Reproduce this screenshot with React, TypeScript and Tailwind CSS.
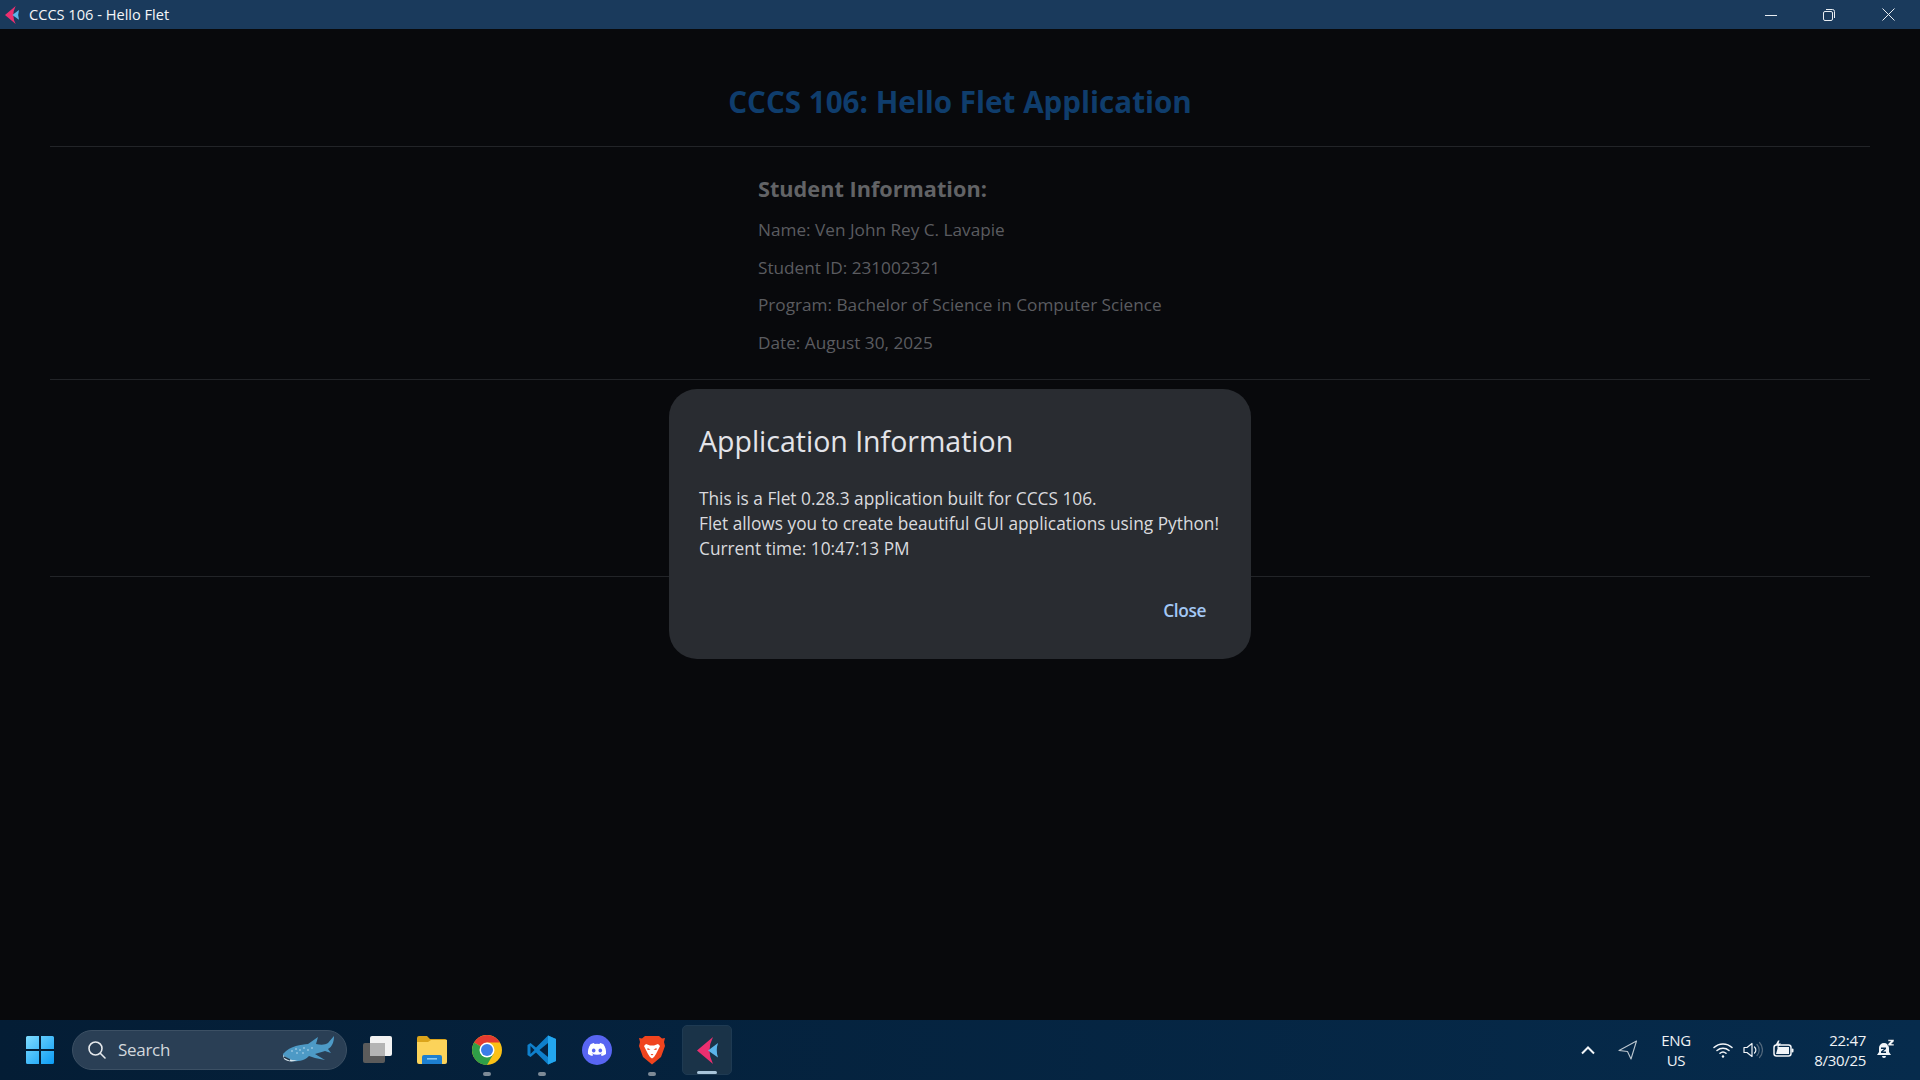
const font = "font-['Open_Sans',sans-serif]";

const FletLogo = ({ w, h }: { w: number; h: number }) => (
  <svg width={w} height={h} viewBox="0 0 21 27">
    <path d="M16 0 L0 13.500 L16 27 Q9 13.500 16 0Z" fill="#ec2f70" />
    <path d="M21 6 L11 13.500 L21 20.500 Q18.500 13.500 21 6Z" fill="#5bb4ea" />
  </svg>
);

const WindowsLogo = () => (
  <svg width="30" height="30" viewBox="0 0 30 30">
    <defs>
      <linearGradient id="win" x1="0" y1="0" x2="1" y2="1">
        <stop offset="0" stopColor="#7fdcff" />
        <stop offset="1" stopColor="#0b9cf5" />
      </linearGradient>
    </defs>
    <path d="M1 2.500A1.500 1.500 0 0 1 2.500 1H14v13H1ZM16 1h11.500A1.500 1.500 0 0 1 29 2.500V14H16ZM1 16h13v13H2.500A1.500 1.500 0 0 1 1 27.500ZM16 16h13v11.500a1.500 1.500 0 0 1-1.500 1.500H16Z" fill="url(#win)" />
  </svg>
);

const WhaleShark = () => (
  <svg width="54" height="30" viewBox="0 0 54 30">
    <path d="M2 19 C10 10 20 10 27 9 L37 2 L35 9 C40 10 44 10 47 8 L53 1 C53 7 51 12 47 14 L50 18 L44 16 C41 17 37 18 34 19 L44 25 L34 23 L28 21 C24 26 14 27 9 26 C5 25 2 23 2 19Z" fill="#4d9ac6" />
    <path d="M2 20 C6 24 12 26 17 25 C13 27 6 27 3 24Z" fill="#d8e6ee" />
    <path d="M3 22 L9 25" stroke="#22384a" strokeWidth="1.400" />
    <g fill="#bfe0f2">
      <circle cx="11" cy="16" r=".8" /><circle cx="15" cy="14" r=".8" /><circle cx="19" cy="15" r=".8" />
      <circle cx="23" cy="13" r=".8" /><circle cx="27" cy="15" r=".8" /><circle cx="31" cy="13" r=".8" /><circle cx="16" cy="18" r=".8" /><circle cx="22" cy="18" r=".8" />
    </g>
  </svg>
);

const TaskView = () => (
  <svg width="30" height="30" viewBox="0 0 30 30">
    <rect x="1" y="8" width="22" height="20" rx="2" fill="#5b5b5b" />
    <rect x="8" y="1" width="22" height="20" rx="2" fill="#f2f2f2" />
    <rect x="8" y="8" width="15" height="13" fill="#b4b4b4" />
  </svg>
);

const Explorer = () => (
  <svg width="30" height="28" viewBox="0 0 30 28">
    <path d="M0 2a2 2 0 0 1 2-2h8l3 3h15a2 2 0 0 1 2 2v6H0Z" fill="#dba41b" />
    <path d="M0 6h11l3-2h16v22a2 2 0 0 1-2 2H2a2 2 0 0 1-2-2Z" fill="#fcd35a" />
    <path d="M5 28v-7a2 2 0 0 1 2-2h16a2 2 0 0 1 2 2v7Z" fill="#1d7fd0" />
    <rect x="10" y="22" width="10" height="1.600" fill="#8cc8f0" />
  </svg>
);

const Chrome = () => (
  <svg width="30" height="30" viewBox="4 4 40 40">
    <circle cx="24" cy="24" r="20" fill="#fbc116" />
    <path d="M6.680 14 A20 20 0 0 1 41.320 14 H24 L15.340 19Z" fill="#e53a30" />
    <path d="M6.680 14 A20 20 0 0 0 24 44 L32.660 29 L15.340 19Z" fill="#2f9e48" />
    <circle cx="24" cy="24" r="10" fill="#fff" />
    <circle cx="24" cy="24" r="8" fill="#3b7de8" />
  </svg>
);

const VSCode = () => (
  <svg width="30" height="30" viewBox="0 0 30 30">
    <path d="M21 0.500 L29 4 V26 L21 29.500 L9 17.500 L3.500 22 L0.500 20 V10 L3.500 8 L9 12.500Z" fill="#0f80cc" />
    <path d="M21 8 L12.500 15 L21 22Z" fill="#04223f" />
    <path d="M3.500 11 L7.500 15 L3.500 19Z" fill="#04223f" />
    <path d="M21 0.500 L29 4 V26 L21 29.500Z" fill="#23a6ee" />
  </svg>
);

const Discord = () => (
  <svg width="30" height="30" viewBox="0 0 30 30">
    <circle cx="15" cy="15" r="15" fill="#5865f2" />
    <path d="M21.500 9.200A15 15 0 0 0 18 8.100l-.5 1a14 14 0 0 0-5 0l-.5-1a15 15 0 0 0-3.500 1.100C6.300 12.500 5.700 15.700 6 18.900A15 15 0 0 0 10.300 21l.9-1.500-1.600-.8.4-.3a10.500 10.500 0 0 0 10 0l.4.3-1.600.8.900 1.500A15 15 0 0 0 24 18.900c.4-3.700-.6-6.900-2.500-9.700Z" fill="#fff" />
    <ellipse cx="11.700" cy="15.500" rx="1.800" ry="2.100" fill="#5865f2" />
    <ellipse cx="18.300" cy="15.500" rx="1.800" ry="2.100" fill="#5865f2" />
  </svg>
);

const Brave = () => (
  <svg width="28" height="30" viewBox="0 0 28 30">
    <path d="M7 1 H21 L24 3.500 L27 3 L26 7 L27 11 L23 22 L14 29.500 L5 22 L1 11 L2 7 L1 3 L4 3.500Z" fill="#f0441e" />
    <path d="M8 9 L12 10.500 H16 L20 9 L22 11 L19.500 16 L18 19 L16 22 L14 23.500 L12 22 L10 19 L8.500 16 L6 11Z" fill="#fff" />
    <path d="M9.500 13 L12.500 14.500 L9.500 15ZM18.500 13 L15.500 14.500 L18.500 15ZM12.500 19 H15.500 L14 20.500Z" fill="#f0441e" />
  </svg>
);

const TaskItem = ({ children, running, active }: { children: React.ReactNode; running?: boolean; active?: boolean }) => (
  <div className={`relative flex h-[50px] w-[50px] items-center justify-center rounded-[5px] ${active ? 'border border-[#1e3a52] bg-[#1a3348]' : ''}`}>
    {children}
    {running && <span className="absolute bottom-[-1px] left-1/2 h-[4px] w-[8px] -translate-x-1/2 rounded-full bg-[#7d8a96]" />}
    {active && <span className="absolute bottom-[0px] left-1/2 h-[3px] w-[20px] -translate-x-1/2 rounded-full bg-[#a8c4da]" />}
  </div>
);

const TrayIcons = () => (
  <div className="flex items-center gap-[10px]">
    <svg width="20" height="20" viewBox="0 0 20 20" fill="none" stroke="#f2f5f8" strokeWidth="1.500" strokeLinecap="round">
      <path d="M1 7.500a13 13 0 0 1 18 0M4 10.500a9 9 0 0 1 12 0M7 13.300a4.500 4.500 0 0 1 6 0" />
      <circle cx="10" cy="16.500" r="1.200" fill="#f2f5f8" stroke="none" />
    </svg>
    <svg width="20" height="20" viewBox="0 0 20 20" fill="none" strokeWidth="1.200">
      <path d="M1 7.500h3l5-4v13l-5-4H1Z" stroke="#f2f5f8" strokeLinejoin="round" />
      <path d="M11.500 7a4 4 0 0 1 0 6" stroke="#f2f5f8" strokeLinecap="round" />
      <path d="M14 4.500a8 8 0 0 1 0 11M16.500 2.500a11 11 0 0 1 0 15" stroke="#52687c" strokeLinecap="round" />
    </svg>
    <svg width="21" height="20" viewBox="0 0 21 20" fill="none">
      <rect x="1" y="5" width="17" height="11" rx="2.500" stroke="#f2f5f8" strokeWidth="1.500" />
      <path d="M3 14l2-7h11v7Z" fill="#f2f5f8" />
      <rect x="18.500" y="8.500" width="2" height="4" rx="1" fill="#f2f5f8" />
      <path d="M5 0.500 L2.500 5 H5 L4 8.500 L8 3.500 H5.500 L6.500 0.500Z" fill="#f2f5f8" />
    </svg>
  </div>
);

const App = () => {
  return (
    <div className={`flex h-[1080px] w-[1920px] flex-col overflow-hidden bg-[#08090c] ${font}`}>
      {/* Title bar */}
      <header className="flex h-[29px] shrink-0 items-center bg-[#1a3a5c] text-white">
        <div className="ml-[5px] flex w-[24px] items-center"><FletLogo w={14} h={18} /></div>
        <span className="text-[14.600px] tracking-[0px] text-[#f4f6f8]">CCCS 106 - Hello Flet</span>
        <div className="ml-auto flex items-center pr-[25px]">
          <svg className="mr-[46px]" width="12" height="12" viewBox="0 0 12 12"><path d="M0 6.500h12" stroke="#e8edf2" strokeWidth="1" /></svg>
          <svg className="mr-[47px]" width="12" height="12" viewBox="0 0 12 12" fill="none" stroke="#e8edf2" strokeWidth="1"><rect x="0.500" y="2.500" width="9" height="9" rx="1.500" /><path d="M3 .500h6.500a2 2 0 0 1 2 2V9" /></svg>
          <svg width="13" height="13" viewBox="0 0 13 13" stroke="#e8edf2" strokeWidth="1"><path d="M.500.500l12 12M12.500.500l-12 12" /></svg>
        </div>
      </header>

      {/* App content */}
      <main className="relative flex-1 px-[50px]">
        <h1 className="flex h-[117px] items-center justify-center pt-[30px] text-[29.600px] font-bold text-[#0f3d6c]">
          CCCS 106: Hello Flet Application
        </h1>
        <div className="h-px bg-[#222428]" />
        <section className="flex h-[232px] flex-col pl-[708px] pt-[28px] text-[#5b5c60]">
          <h2 className="mb-[15px] text-[21.700px] leading-[28px] font-bold text-[#626366]">Student Information:</h2>
          <div className="flex flex-col gap-[13.500px] text-[17.200px] leading-[24px]">
            <p>Name: Ven John Rey C. Lavapie</p>
            <p>Student ID: 231002321</p>
            <p>Program: Bachelor of Science in Computer Science</p>
            <p>Date: August 30, 2025</p>
          </div>
        </section>
        <div className="h-px bg-[#222428]" />
        <div className="h-[196px]" />
        <div className="h-px bg-[#222428]" />

        {/* Dialog */}
        <div className="absolute top-[360px] left-[669px] flex h-[270px] w-[582px] flex-col rounded-[28px] bg-[#292c31] pt-[32px] pr-[30px] pl-[30px]">
          <h3 className="text-[28.500px] leading-[40px] text-[#e3e4e9]">Application Information</h3>
          <div className="mt-[25px] text-[17.300px] leading-[25px] text-[#d9dade]">
            <p>This is a Flet 0.28.3 application built for CCCS 106.</p>
            <p className="whitespace-nowrap">Flet allows you to create beautiful GUI applications using Python!</p>
            <p>Current time: 10:47:13 PM</p>
          </div>
          <div className="mt-[38px] flex justify-end pr-[15px]">
            <span className="text-[17.300px] leading-[24px] font-semibold tracking-[-0.4px] text-[#a3c8f5]">Close</span>
          </div>
        </div>
      </main>

      {/* Taskbar */}
      <footer className="flex h-[60px] shrink-0 items-center bg-gradient-to-r from-[#041d35] to-[#062b4c] pl-[15px] text-white">
        <TaskItem><WindowsLogo /></TaskItem>
        <div className="ml-[7px] flex h-[40px] w-[275px] items-center rounded-full border border-[#3c5064] bg-[#2a3f55] pr-[11px] pl-[14px]">
          <svg width="20" height="20" viewBox="0 0 20 20" fill="none" stroke="#e6e9ec" strokeWidth="1.600" strokeLinecap="round"><circle cx="8.500" cy="8.500" r="6.500" /><path d="M13.500 13.500L18 18" /></svg>
          <span className="ml-[11px] text-[17px] tracking-[-0.3px] text-[#d3d8dd]">Search</span>
          <div className="ml-auto"><WhaleShark /></div>
        </div>
        <div className="ml-[5px] flex items-center gap-[5px]">
          <TaskItem><TaskView /></TaskItem>
          <TaskItem><Explorer /></TaskItem>
          <TaskItem running><Chrome /></TaskItem>
          <TaskItem running><VSCode /></TaskItem>
          <TaskItem><Discord /></TaskItem>
          <TaskItem running><Brave /></TaskItem>
          <TaskItem active><FletLogo w={21} h={27} /></TaskItem>
        </div>

        {/* System tray */}
        <div className="ml-auto flex items-center pr-[24px] text-[15px] leading-[20px] tracking-[-0.3px] text-[#f0f3f6]">
          <svg width="16" height="10" viewBox="0 0 16 10" fill="none" stroke="#f2f5f8" strokeWidth="2"><path d="M2 8.500l6-6 6 6" /></svg>
          <svg className="ml-[22px]" width="20" height="20" viewBox="0 0 20 20" fill="none" stroke="#bcc7d0" strokeWidth="1.100" strokeLinejoin="round"><path d="M18.500 1L1 10.500l8.500 1 3.500 7.500Z" /></svg>
          <div className="ml-[22px] flex w-[32px] flex-col items-center"><span>ENG</span><span>US</span></div>
          <div className="ml-[21px]"><TrayIcons /></div>
          <div className="ml-[19px] flex w-[53px] flex-col items-end"><span>22:47</span><span>8/30/25</span></div>
          <svg className="ml-[10px]" width="20" height="22" viewBox="0 0 20 22" fill="#f2f5f8">
            <path d="M8 4a5 5 0 0 1 5 5v4l2 3H1l2-3V9a5 5 0 0 1 5-5ZM6 17h4a2 2 0 0 1-4 0Z" />
            <path d="M12 .500h6v1.800L15.500 5H18v1.800h-6V5l2.500-2.700H12Z" stroke="#04223f" strokeWidth=".5" />
            <path d="M5 8.500h5v1.500l-3 2.500h3V14H5v-1.500l3-2.500H5Z" fill="#062b4c" />
          </svg>
        </div>
      </footer>
    </div>
  );
};

export default App;
